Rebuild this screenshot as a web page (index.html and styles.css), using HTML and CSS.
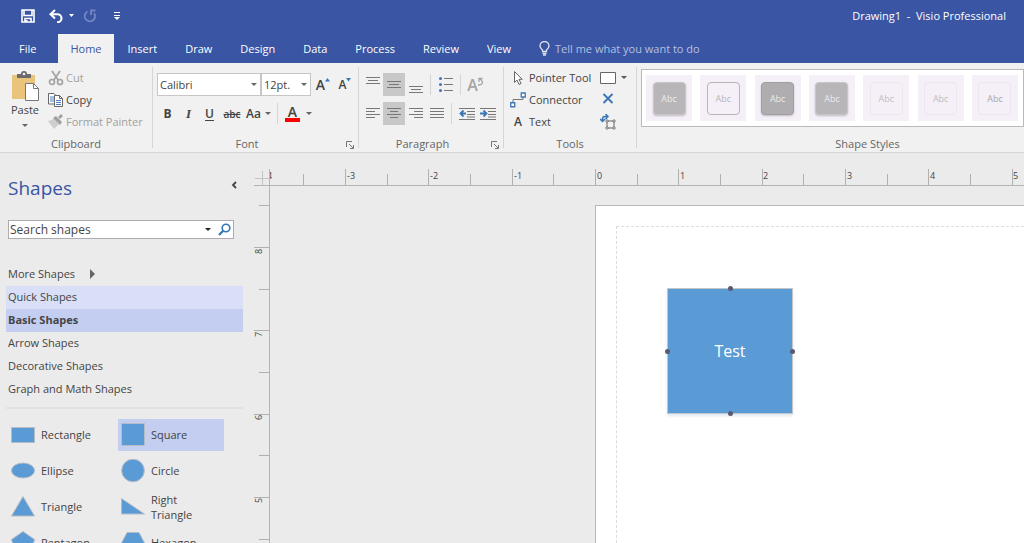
FILE: index.html
```html
<!DOCTYPE html>
<html lang="en">
<head>
<meta charset="utf-8">
<title>Drawing1 - Visio Professional</title>
<link rel="stylesheet" href="styles.css">
</head>
<body>
<header class="app-header">
  <div class="title-bar">
    <div class="quick-access">
      <button class="qa-btn" aria-label="Save"><svg width="14" height="14" viewBox="0 0 14 14" fill="none" stroke="#fff" stroke-width="1.6"><path d="M1 1h12v12H1zM3 1v5.500h8V1"/><path d="M4 13V9.500h6V13" /><path d="M5.500 11v2" stroke-width="2"/></svg></button>
      <button class="qa-btn undo" aria-label="Undo"><svg width="26" height="14" viewBox="0 0 26 14" fill="none" stroke="#fff"><path d="M6 1L1.500 5.200 6 9.500M2 5.200h6.500a4 4 0 0 1 0 8H8" stroke-width="2.100"/><path d="M20 5h5l-2.500 3z" fill="#fff" stroke="none"/></svg></button>
      <button class="qa-btn redo" aria-label="Redo"><svg width="14" height="14" viewBox="0 0 14 14" fill="none" stroke="#7386c2" stroke-width="1.800"><path d="M4.500 2.500A5.200 5.200 0 1 0 11 4M8 6V1.500h4.500"/></svg></button>
      <button class="qa-btn" aria-label="Customize Quick Access Toolbar"><svg width="6" height="8" viewBox="0 0 6 8"><path d="M0 .5h6M0 3.500h6" stroke="#fff"/><path d="M0 5h6L3 8z" fill="#fff"/></svg></button>
    </div>
    <div class="doc-title">Drawing1&nbsp; -&nbsp; Visio Professional</div>
  </div>
  <nav class="tabs">
    <button class="tab file">File</button>
    <button class="tab active">Home</button>
    <button class="tab">Insert</button>
    <button class="tab">Draw</button>
    <button class="tab">Design</button>
    <button class="tab">Data</button>
    <button class="tab">Process</button>
    <button class="tab">Review</button>
    <button class="tab">View</button>
    <button class="tell-me"><svg width="11" height="15" viewBox="0 0 11 15" fill="none" stroke="#dfe4f3" stroke-width="1.300"><path d="M3.500 10.500V9C2 7.800 1 6.700 1 5a4.300 4.300 0 0 1 9 0c0 1.700-1 2.800-2.500 4v1.500zM3.500 12.300h4M4 14h3"/></svg>Tell me what you want to do</button>
  </nav>
</header>

<section class="ribbon">
  <div class="group clipboard">
    <div class="group-body">
      <button class="paste">
        <svg width="30" height="32" viewBox="0 0 30 32"><path d="M2 5h23v24H2z" fill="#eac47b"/><path d="M7 8V4h4a3 3 0 0 1 6 0h4v4z" fill="#6b6b6b"/><circle cx="14" cy="4" r="1.300" fill="#f1f1f1"/><path d="M15.500 13.500h8l5 5v12h-13z" fill="#fff" stroke="#777"/><path d="M23.500 13.500v5h5" fill="none" stroke="#777"/></svg>
        <span>Paste</span><i class="arrow"></i>
      </button>
      <div class="stack">
        <button class="cmd off"><svg width="16" height="16" viewBox="0 0 16 16" fill="none" stroke="#a3a3a3" stroke-width="1.700"><path d="M4 1l6.500 9.500M12 1L5.500 10.500"/><circle cx="4" cy="12" r="2.500"/><circle cx="12" cy="12" r="2.500"/></svg>Cut</button>
        <button class="cmd"><svg width="16" height="16" viewBox="0 0 16 16" fill="#fff" stroke="#666"><path d="M.5 1.500H6L8.500 4v8H.500z"/><path d="M2 5h4M2 7h4M2 9h4" stroke="#4a82bd"/><path d="M6.500 3.500h5l3 3v8h-8z"/><path d="M11.500 3.500v3h3" fill="none"/><path d="M8 8.500h5M8 10.500h5M8 12.500h5" stroke="#4a82bd"/></svg>Copy</button>
        <button class="cmd off"><svg width="16" height="16" viewBox="0 0 16 16"><path d="M0 7l6-2 5 5-5 5z" fill="#d0cdd0"/><path d="M5 4l3-2 6 6-2 3zM10 3l3-3 2 2-3 3z" fill="#a0a0a0"/></svg>Format Painter</button>
      </div>
    </div>
    <div class="group-label">Clipboard</div>
  </div>

  <div class="group font">
    <div class="group-body rows">
      <div class="row">
        <span class="combo face"><select aria-label="Font"><option>Calibri</option></select></span>
        <span class="combo size"><select aria-label="Font size"><option>12pt.</option></select></span>
        <button class="tool grow" aria-label="Increase font size"><span class="glyph big">A</span><svg width="6" height="14" viewBox="0 0 6 14"><path d="M0 3.500h5L2.500 0z" fill="#3d76b5"/></svg></button>
        <button class="tool" aria-label="Decrease font size"><span class="glyph">A</span><svg width="6" height="14" viewBox="0 0 6 14"><path d="M0 0h5L2.500 3.500z" fill="#3d76b5"/></svg></button>
      </div>
      <div class="row">
        <button class="tool"><b>B</b></button>
        <button class="tool italic">I</button>
        <button class="tool under">U</button>
        <button class="tool strike">abc</button>
        <button class="tool case">Aa<i class="arrow"></i></button>
        <i class="sep"></i>
        <button class="tool color">A</button>
        <button class="tool narrow" aria-label="Font color options"><i class="arrow"></i></button>
      </div>
    </div>
    <div class="group-label">Font</div>
    <button class="launcher" aria-label="Font settings"><svg width="8" height="8" viewBox="0 0 8 8" fill="none" stroke="#777"><path d="M.5 6V.5H6M3 3l4 4M7.500 4v3.500H4"/></svg></button>
  </div>

  <div class="group paragraph">
    <div class="group-body rows">
      <div class="row">
        <button class="tool" aria-label="Align top"><svg class="lines" width="14" height="16" viewBox="0 0 14 16"><path d="M0 .5h14M2 3.500h10M0 6.500h14"/></svg></button>
        <button class="tool on" aria-label="Align middle"><svg class="lines" width="14" height="16" viewBox="0 0 14 16"><path d="M0 4.500h14M2 7.500h10M0 10.500h14"/></svg></button>
        <button class="tool" aria-label="Align bottom"><svg class="lines" width="14" height="16" viewBox="0 0 14 16"><path d="M0 9.500h14M2 12.500h10M0 15.500h14"/></svg></button>
        <i class="sep"></i>
        <button class="tool" aria-label="Bullets"><svg class="lines" width="14" height="16" viewBox="0 0 14 16"><path d="M5 1.500h9M5 7.500h9M5 13.500h9"/><g fill="#3d76b5" stroke="none"><circle cx="1.500" cy="1.500" r="1.500"/><circle cx="1.500" cy="7.500" r="1.500"/><circle cx="1.500" cy="13.500" r="1.500"/></g></svg></button>
        <i class="sep"></i>
        <button class="tool rotate" aria-label="Rotate text">A<svg width="6" height="16" viewBox="0 0 6 16" fill="none" stroke="#a5a5a5" stroke-width="1.300"><path d="M0 8c5 0 6-3 2-6M1 5V1.500h3.500"/></svg></button>
      </div>
      <div class="row">
        <button class="tool" aria-label="Align left"><svg class="lines" width="14" height="12" viewBox="0 0 14 12"><path d="M0 .5h14M0 3.500h9M0 6.500h14M0 9.500h9"/></svg></button>
        <button class="tool on" aria-label="Center"><svg class="lines" width="14" height="12" viewBox="0 0 14 12"><path d="M0 .5h14M3 3.500h8M0 6.500h14M3 9.500h8"/></svg></button>
        <button class="tool" aria-label="Align right"><svg class="lines" width="14" height="12" viewBox="0 0 14 12"><path d="M0 .5h14M5 3.500h9M0 6.500h14M5 9.500h9"/></svg></button>
        <button class="tool" aria-label="Justify"><svg class="lines" width="14" height="12" viewBox="0 0 14 12"><path d="M0 .5h14M0 3.500h14M0 6.500h14M0 9.500h14"/></svg></button>
        <i class="sep"></i>
        <button class="tool" aria-label="Decrease indent"><svg class="lines" width="16" height="14" viewBox="0 0 16 14"><path d="M0 1.500h16M8 4.500h8M8 7.500h8M0 12.500h16M8 10h8"/><path d="M7 6.500H2M4.500 3.500l-3 3 3 3" stroke="#3d76b5" stroke-width="1.800"/></svg></button>
        <button class="tool" aria-label="Increase indent"><svg class="lines" width="16" height="14" viewBox="0 0 16 14"><path d="M0 1.500h16M8 4.500h8M8 7.500h8M0 12.500h16M8 10h8"/><path d="M0 6.500h6M3.500 3.500l3 3-3 3" stroke="#3d76b5" stroke-width="1.800"/></svg></button>
      </div>
    </div>
    <div class="group-label">Paragraph</div>
    <button class="launcher" aria-label="Paragraph settings"><svg width="8" height="8" viewBox="0 0 8 8" fill="none" stroke="#777"><path d="M.5 6V.5H6M3 3l4 4M7.500 4v3.500H4"/></svg></button>
  </div>

  <div class="group tools">
    <div class="group-body">
      <div class="stack">
        <button class="cmd"><svg width="16" height="16" viewBox="0 0 16 16"><path d="M4.500 1.500v11l2.500-2.500 2 4.500 2-1-2-4.200h3.200z" fill="#fff" stroke="#666"/></svg>Pointer Tool</button>
        <button class="cmd"><svg width="16" height="16" viewBox="0 0 16 16" fill="none"><path d="M3 11V7.500h10V5" stroke="#777"/><path d="M.75 10.750h4v4h-4zM11.250 1h4v4h-4z" fill="#fff" stroke="#3d76b5" stroke-width="1.300"/></svg>Connector</button>
        <button class="cmd"><span class="text-icon">A</span>Text</button>
      </div>
      <div class="stack">
        <button class="cmd" aria-label="Rectangle"><svg width="27" height="14" viewBox="0 0 27 14"><path d="M.5 1.500h15v11H.500z" fill="#fff" stroke="#666"/><path d="M21 5h6l-3 3z" fill="#555"/></svg></button>
        <button class="cmd" aria-label="Connection Point"><svg width="16" height="14" viewBox="0 0 16 14"><path d="M3.500 1l9 9M12.500 1l-9 9" stroke="#3d76b5" stroke-width="2"/></svg></button>
        <button class="cmd" aria-label="Text Block"><svg width="16" height="16" viewBox="0 0 16 16" fill="none"><path d="M2.500 7V5q0-2.500 2.500-2.500h2.500M5.500 0L8 2.500 5.500 5M0 5l2.500 2.500L5 5" stroke="#3d76b5" stroke-width="1.500"/><path d="M7 7h7v7H7z" stroke="#666"/><path d="M6 6h2v2H6zM13 6h2v2h-2zM6 13h2v2H6zM13 13h2v2h-2z" fill="#fff" stroke="#666" stroke-width=".8"/></svg></button>
      </div>
    </div>
    <div class="group-label">Tools</div>
  </div>

  <div class="group styles">
    <div class="gallery">
      <button class="style"><span class="swatch gray">Abc</span></button>
      <button class="style"><span class="swatch outline">Abc</span></button>
      <button class="style"><span class="swatch dark">Abc</span></button>
      <button class="style"><span class="swatch gray">Abc</span></button>
      <button class="style"><span class="swatch">Abc</span></button>
      <button class="style"><span class="swatch">Abc</span></button>
      <button class="style"><span class="swatch strong">Abc</span></button>
    </div>
    <div class="group-label">Shape Styles</div>
  </div>
</section>

<main class="workspace">
  <aside class="shapes">
    <div class="shapes-head">
      <h1>Shapes</h1>
      <button aria-label="Minimize the Shapes window"><svg width="6" height="8" viewBox="0 0 6 8" fill="none" stroke="#444" stroke-width="1.800"><path d="M5 1L2 4l3 3"/></svg></button>
    </div>
    <form class="search">
      <input type="text" aria-label="Search shapes" placeholder="Search shapes">
      <button type="button" aria-label="Search history"><i class="arrow dark"></i></button>
      <button type="button" aria-label="Search"><svg width="13" height="13" viewBox="0 0 13 13" fill="none" stroke="#3474b8"><circle cx="8" cy="5" r="3.800" stroke-width="1.600"/><path d="M5.200 7.800L1 12" stroke-width="2.200"/></svg></button>
    </form>
    <div class="stencils">
      <button>More Shapes <i class="more"></i></button>
      <button class="quick">Quick Shapes</button>
      <button class="current">Basic Shapes</button>
      <button>Arrow Shapes</button>
      <button>Decorative Shapes</button>
      <button>Graph and Math Shapes</button>
    </div>
    <div class="masters">
      <button><svg class="shape" viewBox="0 0 24 24"><path d="M.5 4.500h23v15H.500z"/></svg>Rectangle</button>
      <button class="picked"><svg class="shape" viewBox="0 0 24 24"><path d="M.5.5h23v22H.5z"/></svg>Square</button>
      <button><svg class="shape" viewBox="0 0 24 24"><ellipse cx="12" cy="11.500" rx="11.500" ry="7.500"/></svg>Ellipse</button>
      <button><svg class="shape" viewBox="0 0 24 24"><circle cx="12" cy="11.500" r="11.300"/></svg>Circle</button>
      <button><svg class="shape" viewBox="0 0 24 24"><path d="M12 1.500L23.500 21H.500z"/></svg>Triangle</button>
      <button><svg class="shape" viewBox="0 0 24 24"><path d="M.5 3.500L23.500 19H.500z"/></svg>Right Triangle</button>
      <button><svg class="shape" viewBox="0 0 24 24"><path d="M12 .5l11.500 8-4 14.500h-15L.5 8.500z"/></svg>Pentagon</button>
      <button><svg class="shape" viewBox="0 0 24 24"><path d="M6 1.500h12l5.500 10.500L18 22.500H6L.5 12z"/></svg>Hexagon</button>
    </div>
  </aside>

  <div class="drawing">
    <div class="corner"><svg width="16" height="17" viewBox="0 0 16 17"><path d="M8.500 2v14M1 9.500h15" stroke="#c4c4c4"/></svg></div>
    <svg class="ruler across" height="17">
      <path d="M33.500 5v12M75.500 0v17M117.500 5v12M158.500 0v17M200.500 5v12M242.500 0v17M283.500 5v12M325.500 0v17M367.500 5v12M408.500 0v17M450.500 5v12M492.500 0v17M533.500 5v12M575.500 0v17M617.500 5v12M658.500 0v17M700.500 5v12M742.500 0v17"/>
      <text x="-3" y="10">4</text><text x="77" y="10">-3</text><text x="160" y="10">-2</text><text x="244" y="10">-1</text><text x="327" y="10">0</text><text x="410" y="10">1</text><text x="493" y="10">2</text><text x="577" y="10">3</text><text x="660" y="10">4</text><text x="743" y="10">5</text>
    </svg>
    <svg class="ruler down" width="16">
      <path d="M5 19.500h11M0 61.500h16M5 103.500h11M0 144.500h16M5 186.500h11M0 228.500h16M5 269.500h11M0 311.500h16M5 353.500h11"/>
      <g><text transform="translate(8 68) rotate(-90)">8</text><text transform="translate(8 151) rotate(-90)">7</text><text transform="translate(8 234) rotate(-90)">6</text><text transform="translate(8 317) rotate(-90)">5</text></g>
    </svg>
    <div class="canvas">
      <div class="page">
        <div class="margin"></div>
        <div class="node">Test<i class="dot n"></i><i class="dot e"></i><i class="dot s"></i><i class="dot w"></i></div>
      </div>
    </div>
  </div>
</main>
</body>
</html>
```
FILE: styles.css
```css
* { box-sizing: border-box; }
body {
  margin: 0;
  height: 100vh;
  display: flex;
  flex-direction: column;
  overflow: hidden;
  background: #ebebeb;
  color: #444;
  font: 12px/16px "Open Sans", "Noto Sans", sans-serif;
}
button, input, select { font: inherit; color: inherit; }
button { border: 0; padding: 0; background: none; }
svg { display: block; flex: none; }
.arrow {
  flex: none;
  border: 3px solid transparent;
  border-top-color: #666;
  border-bottom: 0;
}
.arrow.dark { border-top-color: #222; }

/* Header */
.app-header { background: #3955a3; color: #fff; font-size: 11px; }
.title-bar {
  display: flex;
  align-items: center;
  justify-content: space-between;
  height: 34px;
  padding: 0 18px 2px 21px;
}
.quick-access { display: flex; align-items: center; }
.qa-btn.undo { margin-left: 14px; }
.qa-btn.redo { margin: 0 17px 0 8px; }
.tabs { display: flex; height: 29px; }
.tab { padding: 0 12px; margin-right: 4px; }
.tab.file { padding: 0 18px 0 19px; }
.tab.active { background: #f1f1f1; color: #3955a3; margin-right: 2px; }
.tell-me {
  display: flex;
  align-items: center;
  gap: 5px;
  margin-left: 12px;
  color: #b5c0e0;
}

/* Ribbon */
.ribbon {
  display: flex;
  height: 90px;
  flex: none;
  padding: 4px 0;
  background: #f1f1f1;
  border-bottom: 1px solid #d5d5d5;
}
.group {
  position: relative;
  display: flex;
  flex-direction: column;
  flex: none;
  border-right: 1px solid #d5d5d5;
}
.group-body { display: flex; flex: 1; }
.group-label { margin-bottom: -4px; text-align: center; color: #666; font-size: 11px; line-height: 16px; }
.clipboard { width: 153px; }
.font { width: 206px; }
.paragraph { width: 145px; }
.font .group-label, .paragraph .group-label { padding-right: 17px; }
.tools { width: 133px; }
.styles { flex: 1; min-width: 0; border-right: 0; padding-left: 4px; }
.styles .group-label { padding-left: 70px; }
.paste {
  display: flex;
  flex-direction: column;
  align-items: center;
  width: 38px;
  margin: 3px 4px 0 6px;
  font-size: 11px;
}
.paste .arrow { margin-top: 6px; }
.stack { display: flex; flex-direction: column; }
.cmd { display: flex; align-items: center; gap: 2px; height: 22px; flex: none; font-size: 11px; white-space: nowrap; }
.cmd.off { color: #a0a0a0; }
.tools .stack:first-child { width: 90px; margin-left: 6px; }
.tools .cmd { gap: 3px; }
.text-icon { width: 16px; font-size: 12px; font-weight: 600; }
.rows { flex-direction: column; padding-top: 6px; gap: 6px; }
.row { display: flex; align-items: center; height: 23px; }
.font .rows { padding-left: 4px; }
.paragraph .rows { padding-left: 3px; }
.combo { position: relative; display: flex; height: 23px; }
.combo::after {
  content: "";
  position: absolute;
  right: 4px;
  top: 10px;
  border: 3px solid transparent;
  border-top-color: #666;
  border-bottom: 0;
  pointer-events: none;
}
.combo select {
  appearance: none;
  width: 100%;
  border: 1px solid #c6c6c6;
  border-radius: 0;
  background: #fff;
  padding: 0 2px;
  font-size: 11px;
}
.face { width: 104px; }
.size { width: 50px; }
.tool {
  display: flex;
  align-items: center;
  justify-content: center;
  width: 21px;
  height: 23px;
  flex: none;
}
.tool.on { background: #c8c8c8; width: 22px; }
.tool.grow { margin: 0 1px 0 2px; }
.glyph { font-weight: 600; font-size: 12px; }
.glyph.big { font-size: 14px; }
.italic { font: italic bold 13px "Liberation Serif", serif; }
.under { text-decoration: underline; font-weight: 600; text-underline-offset: 2px; }
.tool.strike { width: 24px; text-decoration: line-through; font-size: 10px; font-weight: 600; }
.tool.case { width: 29px; gap: 4px; font-weight: 600; }
.tool.color {
  height: 16px;
  width: 15px;
  margin: 0 3px;
  font-size: 14px;
  line-height: 12px;
  font-weight: 600;
  align-items: flex-start;
  border-bottom: 4px solid #f00;
}
.tool.narrow { width: 12px; }
.rotate { font-size: 16px; color: #a5a5a5; font-weight: 600; }
.sep { width: 1px; height: 21px; background: #d5d5d5; margin: 0 4px; flex: none; }
.lines { fill: none; stroke: #777; }
.launcher { position: absolute; right: 4px; bottom: -1px; }
.gallery {
  display: flex;
  justify-content: space-between;
  overflow: hidden;
  margin-top: 2px;
  height: 58px;
  padding: 5px 5px 5px 4px;
  border: 1px solid #b9b9b9;
  background: #fff;
}
.styles .group-label { margin-top: auto; }
.style {
  display: grid;
  place-items: center;
  width: 46px;
  height: 46px;
  background: #f5f0f7;
}
.swatch {
  width: 33px;
  height: 33px;
  border: 1px solid #ece7ee;
  border-radius: 4px;
  color: #c0bcc2;
  font-size: 9px;
  line-height: 31px;
}
.swatch.gray { background: #b8b6b9; border-color: #c8c6c9; color: #ececec; box-shadow: 0 1px 2px #c0bcc2; }
.swatch.dark { background: #afadb0; border-color: #a19fa2; color: #ececec; box-shadow: 0 1px 2px #c0bcc2; }
.swatch.outline { border-color: #b8b6b9; color: #b8b6b9; }
.swatch.strong { color: #aaa6ad; }

/* Workspace */
.workspace { display: flex; flex: 1; min-height: 0; }
.shapes { width: 254px; flex: none; overflow: hidden; padding-left: 6px; }
.shapes-head {
  display: flex;
  align-items: center;
  justify-content: space-between;
  margin-top: 21px;
  padding: 0 17px 0 2px;
}
.shapes-head h1 { margin: 0; font-size: 19px; line-height: 28px; font-weight: 400; color: #3955a3; }
.shapes-head button { margin-bottom: 6px; }
.search {
  display: flex;
  align-items: center;
  height: 19px;
  margin: 18px 20px 24px 2px;
  padding-right: 2px;
  gap: 7px;
  border: 1px solid #ababb0;
  background: #fff;
}
.search input { flex: 1; min-width: 0; border: 0; padding: 0 1px; height: 17px; background: none; outline: 0; font-size: 12px; }
.search input::placeholder { color: #444; opacity: 1; }
.search button { display: flex; }
.stencils { display: flex; flex-direction: column; margin-right: 11px; padding-bottom: 6px; border-bottom: 2px solid #e1e1e1; }
.stencils button { display: flex; align-items: center; height: 23px; padding: 0 0 1px 2px; font-size: 11px; }
.stencils .quick { background: #d8dff7; }
.stencils .current { background: #c3cef1; font-weight: 700; }
.more { border: 5px solid transparent; border-left-color: #666; border-right: 0; margin-left: 15px; }
.masters { display: grid; grid-template-columns: 108px 106px; row-gap: 4px; column-gap: 2px; margin: 10px 0 0 2px; }
.masters button { display: flex; align-items: center; gap: 6px; min-height: 32px; padding: 0 20px 1px 3px; text-align: left; font-size: 11px; line-height: 15px; }
.masters .picked { background: #c3cef1; }
.shape { width: 24px; height: 24px; fill: #5b9bd5; stroke: #b5bcc5; stroke-width: 1px; }

/* Drawing area */
.drawing {
  flex: 1;
  min-width: 0;
  display: grid;
  grid-template: 17px 1fr / 16px 1fr;
  padding-top: 16px;
}
.corner, .across { border-bottom: 1px solid #b4b4b4; }
.corner, .down { border-right: 1px solid #b4b4b4; }
.ruler { width: 100%; stroke: #b0b0b0; overflow: hidden; }
.ruler text { stroke: none; fill: #444; font-size: 9px; }
.ruler.down { width: 16px; height: 100%; }
.canvas { position: relative; overflow: hidden; }
.page {
  position: absolute;
  left: 325px;
  top: 19px;
  right: 0;
  bottom: 0;
  background: #fff;
  border: solid #b4b8bd;
  border-width: 1px 0 0 1px;
}
.margin {
  position: absolute;
  left: 20px;
  top: 20px;
  right: 0;
  bottom: 0;
  border: dashed #dcdcdc;
  border-width: 1px 0 0 1px;
}
.node {
  position: absolute;
  left: 71px;
  top: 82px;
  width: 126px;
  height: 126px;
  display: grid;
  place-items: center;
  border: 1px solid #c3c6ca;
  background: #5b9bd5;
  color: #fff;
  font-size: 16px;
  box-shadow: 0 2px 3px #dfe9f2;
}
.dot { position: absolute; width: 5px; height: 5px; border-radius: 50%; background: #5a5a72; }
.dot.n { top: -3px; left: 60px; }
.dot.s { bottom: -3px; left: 60px; }
.dot.w { left: -3px; top: 60px; }
.dot.e { right: -3px; top: 60px; }
```
